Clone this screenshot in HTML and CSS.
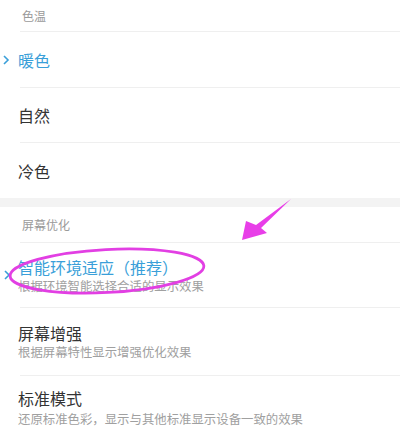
FILE: index.html
```html
<!DOCTYPE html>
<html lang="zh">
<head>
<meta charset="utf-8">
<link rel="stylesheet" href="styles.css">
</head>
<body>
<div class="page">
  <div class="header h1">色温</div>
  <div class="divider"></div>
  <div class="item r1 selected">
    <svg class="chev" width="18" height="10" viewBox="0 0 18 10"><polyline points="4,1 8,5 4,9" fill="none" stroke="#3a9fd9" stroke-width="1.6"/></svg>
    <div class="texts"><div class="title">暖色</div></div>
  </div>
  <div class="divider"></div>
  <div class="item r2">
    <span class="chev"></span>
    <div class="texts"><div class="title">自然</div></div>
  </div>
  <div class="divider"></div>
  <div class="item r3">
    <span class="chev"></span>
    <div class="texts"><div class="title">冷色</div></div>
  </div>
  <div class="band"></div>
  <div class="header h2">屏幕优化</div>
  <div class="divider"></div>
  <div class="item r4 selected">
    <svg class="chev" width="18" height="10" viewBox="0 0 18 10"><polyline points="5,1 9,5 5,9" fill="none" stroke="#3a9fd9" stroke-width="1.6"/></svg>
    <div class="texts">
      <div class="title">智能环境适应（推荐）</div>
      <div class="sub">根据环境智能选择合适的显示效果</div>
    </div>
  </div>
  <div class="divider"></div>
  <div class="item r5">
    <span class="chev"></span>
    <div class="texts">
      <div class="title">屏幕增强</div>
      <div class="sub">根据屏幕特性显示增强优化效果</div>
    </div>
  </div>
  <div class="divider"></div>
  <div class="item r6">
    <span class="chev"></span>
    <div class="texts">
      <div class="title">标准模式</div>
      <div class="sub">还原标准色彩，显示与其他标准显示设备一致的效果</div>
    </div>
  </div>
  <svg class="annot" width="400" height="437" viewBox="0 0 400 437">
    <ellipse cx="107" cy="271" rx="97" ry="21.5" transform="rotate(-3 107 271)" fill="none" stroke="#e23fe3" stroke-width="2.8"/>
    <polygon points="291,199 261,228 267,233 242,240 246,221 256,225" fill="#e83ee8"/>
  </svg>
</div>
</body>
</html>
```
FILE: styles.css
```css
html, body {
  margin: 0;
  padding: 0;
  background: #ffffff;
}
.page {
  position: relative;
  width: 400px;
  height: 437px;
  overflow: hidden;
  font-family: "Noto Sans CJK SC", "Noto Sans", sans-serif;
}
.header {
  display: flex;
  align-items: center;
  padding-left: 22px;
  font-size: 12px;
  color: #9a9a9a;
}
.h1 { height: 31px; }
.h2 { height: 35px; }
.divider {
  height: 1px;
  margin-left: 20px;
  background: #efefef;
}
.band {
  height: 9px;
  background: #f3f3f3;
}
.item {
  display: flex;
  align-items: center;
}
.chev {
  display: block;
  width: 18px;
  flex: 0 0 18px;
}
.r1 { height: 55px; }
.r2 { height: 54px; }
.r3 { height: 55px; }
.r4 { height: 64px; }
.r5 { height: 67px; }
.r6 { height: 62px; }
.title {
  font-size: 16px;
  line-height: 22px;
  color: #333333;
}
.selected .title {
  color: #3a9fd9;
}
.sub {
  font-size: 12.4px;
  line-height: 17px;
  color: #a0a0a0;
}
.r6 .sub { margin-top: 2px; }
.annot {
  position: absolute;
  left: 0;
  top: 0;
  pointer-events: none;
}
```
